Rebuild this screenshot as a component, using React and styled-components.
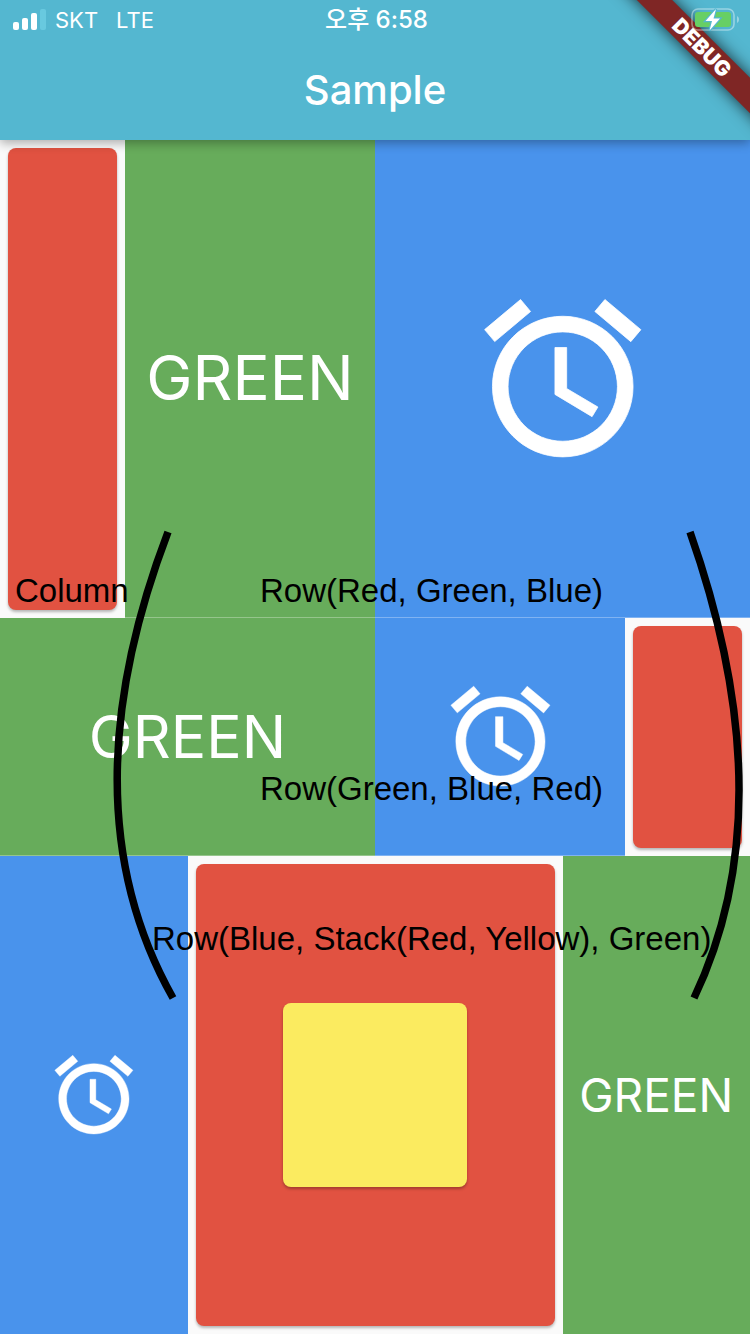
import styled, { createGlobalStyle } from 'styled-components'


const colors = {
    cyan: '#54b7d0',
    red: '#e15241',
    green: '#67ac5b',
    blue: '#4993ec',
    yellow: '#fbeb60',
    paper: '#fafafa'
}

const GlobalStyle = createGlobalStyle`
    * {
        box-sizing: border-box;
    }

    body {
        margin: 0;
        font-family: Inter, 'Noto Sans CJK KR', sans-serif;
        background: ${colors.paper};
    }
`

const Screen = styled.div`
    position: relative;
    display: flex;
    flex-direction: column;
    min-height: 100vh;
    overflow: hidden;
`

const Header = styled.header`
    position: relative;
    z-index: 1;
    height: 140px;
    background: ${colors.cyan};
    color: #fff;
    box-shadow: 0 3px 10px rgba(0, 0, 0, .32);
`

const StatusBar = styled.div`
    display: grid;
    grid-template-columns: 1fr auto 1fr;
    align-items: center;
    height: 40px;
    padding: 0 10px 0 13px;
    font-size: 22px;
    line-height: 40px;

    .carrier {
        display: flex;
        align-items: center;
        gap: 8px;
    }

    .network {
        margin-left: 10px;
    }

    .time {
        font-size: 24px;
        font-weight: 500;
    }

    .battery {
        position: relative;
        z-index: 2;
        justify-self: end;
    }

    svg {
        display: block;
    }
`

const Title = styled.h1`
    margin: 0;
    font-size: 40px;
    font-weight: 500;
    line-height: 100px;
    text-align: center;
`

const DebugBanner = styled.div`
    position: absolute;
    z-index: 1;
    top: 35px;
    right: -102px;
    width: 300px;
    height: 25px;
    background: #7f2625;
    box-shadow: 0 0 16px rgba(0, 0, 0, .75);
    font-size: 21px;
    font-weight: 900;
    line-height: 25px;
    text-align: center;
    transform: rotate(45deg);
`

const Board = styled.main`
    position: relative;
    display: flex;
    flex-direction: column;
    flex: 1;
`

const Row = styled.section`
    position: relative;
    display: flex;
    flex: ${p => p.$flex} 1 0;
    min-height: 0;
`

const Cell = styled.div`
    display: flex;
    align-items: center;
    justify-content: center;
    flex: ${p => p.$flex} 1 0;
    min-width: 0;
    background: ${p => p.$color || colors.paper};
    border-bottom: ${p => p.$line ? '1px solid rgba(255, 255, 255, .3)' : 'none'};
    container-type: size;
`

const Card = styled.div`
    display: flex;
    align-items: center;
    justify-content: center;
    flex: 1;
    align-self: stretch;
    margin: 8px;
    border-radius: 8px;
    background: ${colors.red};
    box-shadow: 0 2px 3px rgba(0, 0, 0, .28);
`

const YellowCard = styled.div`
    width: 184px;
    height: 184px;
    border-radius: 8px;
    background: ${colors.yellow};
    box-shadow: 0 2px 3px rgba(0, 0, 0, .28);
`

const GreenText = styled.span`
    color: #fff;
    font-size: ${p => p.$size}px;
    line-height: 1;
`

const Alarm = styled.svg`
    display: block;
    width: 50cqmin;
    height: 50cqmin;
    fill: #fff;
    stroke: #fff;
    stroke-width: .1;
    stroke-linejoin: round;
`

const Caption = styled.span`
    position: absolute;
    left: ${p => p.$left};
    top: ${p => p.$top};
    color: #000;
    font-family: 'Liberation Sans', Arial, sans-serif;
    font-size: 33px;
    line-height: 42px;
    white-space: nowrap;
`

const Brackets = styled.svg`
    position: absolute;
    inset: 0;
    width: 100%;
    height: 100%;
    fill: none;
    stroke: #000;
    stroke-width: 7.5;
    pointer-events: none;
`


const AlarmIcon = () => (
    <Alarm viewBox='0 0 24 24' aria-hidden='true'>
        <path d='M22 5.72l-4.6-3.86-1.29 1.53 4.6 3.86L22 5.72zM7.88 3.39L6.6 1.86 2 5.71l1.29 1.53 4.59-3.85zM12.5 8H11v6l4.75 2.85.75-1.23-4-2.37V8zM12 4c-4.97 0-9 4.03-9 9s4.02 9 9 9c4.97 0 9-4.03 9-9s-4.03-9-9-9zm0 16c-3.87 0-7-3.13-7-7s3.13-7 7-7 7 3.13 7 7-3.13 7-7 7z' />
    </Alarm>
)

const Red = ({ flex, children }) => (
    <Cell $flex={flex}>
        <Card>{children}</Card>
    </Cell>
)

const Green = ({ flex, size, line }) => (
    <Cell $flex={flex} $color={colors.green} $line={line}>
        <GreenText $size={size}>GREEN</GreenText>
    </Cell>
)

const Blue = ({ flex, line }) => (
    <Cell $flex={flex} $color={colors.blue} $line={line}>
        <AlarmIcon />
    </Cell>
)

const Signal = () => (
    <svg width='34' height='22' viewBox='0 0 34 22' fill='#fff' aria-hidden='true'>
        <rect x='0' y='13' width='6' height='8' rx='2' />
        <rect x='9' y='9' width='6' height='12' rx='2' />
        <rect x='18' y='4' width='6' height='17' rx='2' />
        <rect x='27' y='0' width='6' height='21' rx='2' fill='#68c9df' />
    </svg>
)

const Battery = () => (
    <svg className='battery' width='49' height='24' viewBox='0 0 49 24' aria-hidden='true'>
        <rect x='1' y='1' width='42' height='21' rx='6' fill='none' stroke='#fff' strokeOpacity='.4' strokeWidth='1.6' />
        <path d='M46 8c1.5 1 2 2 2 3.5s-.5 2.5-2 3.500z' fill='#fff' fillOpacity='.4' />
        <rect x='4' y='4' width='36' height='15' rx='3' fill='#67cf65' />
        <path d='M25 1L14.500 13h6.500L18.500 22.500 29 10.500h-6.500z' fill='#fff' stroke={colors.cyan} strokeWidth='2.400' paintOrder='stroke' />
    </svg>
)

export default function App() {
    return (
        <Screen>
            <GlobalStyle />
            <Header>
                <StatusBar>
                    <div className='carrier'>
                        <Signal />
                        <span>SKT</span>
                        <span className='network'>LTE</span>
                    </div>
                    <span className='time'>오후 6:58</span>
                    <Battery />
                </StatusBar>
                <Title>Sample</Title>
                <DebugBanner>DEBUG</DebugBanner>
            </Header>

            <Board>
                <Row $flex={2}>
                    <Red flex={1} />
                    <Green flex={2} size={62} line />
                    <Blue flex={3} line />
                    <Caption $left='2%' $top='90%'>Column</Caption>
                    <Caption $left='260px' $top='90%'>Row(Red, Green, Blue)</Caption>
                </Row>
                <Row $flex={1}>
                    <Green flex={3} size={59} line />
                    <Blue flex={2} line />
                    <Red flex={1} />
                    <Caption $left='260px' $top='63%'>Row(Green, Blue, Red)</Caption>
                </Row>
                <Row $flex={2}>
                    <Blue flex={1} />
                    <Red flex={2}>
                        <YellowCard />
                    </Red>
                    <Green flex={1} size={46} />
                    <Caption $left='152px' $top='13%'>Row(Blue, Stack(Red, Yellow), Green)</Caption>
                </Row>
                <Brackets viewBox='0 0 750 1194' preserveAspectRatio='none' aria-hidden='true'>
                    <path d='M168 392Q64 665 173 858' />
                    <path d='M690 392Q786 665 694 858' />
                </Brackets>
            </Board>
        </Screen>
    )
}
